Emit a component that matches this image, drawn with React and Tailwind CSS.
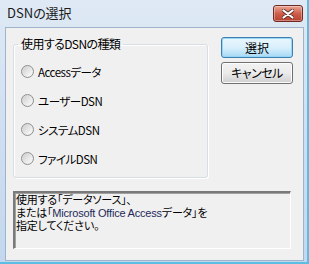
export default function App() {
  const radios = ["Accessデータ", "ユーザーDSN", "システムDSN", "ファイルDSN"];
  return (
    <div className="w-[309px] h-[264px] bg-gradient-to-b from-[#dfe9f5] via-[#cfdff1] to-[#c4d7ee] border-r-2 border-b-2 border-r-[#5cbde3] border-b-[#5cbde3] flex flex-col pl-[5px] pr-[3px] pb-[1px] font-['Noto_Sans_CJK_JP','Noto_Sans',sans-serif] [font-feature-settings:'palt'] text-black">
      <div className="h-[27px] shrink-0 flex items-start justify-between">
        <span className="mt-[4px] ml-[2px] text-[13px] leading-[18px] text-[#1a1a1a]">DSNの選択</span>
        <div className="mt-[5px] mr-[1px] w-[30px] h-[17px] rounded-[3px] border border-[#6e2b25] bg-gradient-to-b from-[#e8a596] via-[#cf5e4b] to-[#b8412f] flex items-center justify-center shadow-[inset_0_0_0_1px_rgba(255,255,255,0.35)]">
          <svg width="12" height="10" viewBox="0 0 12 10">
            <path d="M1.5 1.5 L10.5 8.5 M10.5 1.5 L1.5 8.5" stroke="#5a2a24" strokeWidth="3.6" strokeLinecap="round" />
            <path d="M1.5 1.5 L10.5 8.5 M10.5 1.5 L1.5 8.5" stroke="#ffffff" strokeWidth="2.2" strokeLinecap="round" />
          </svg>
        </div>
      </div>
      <div className="flex-1 bg-[#f0f0f0] border border-[#9fb3cb] pl-[7px] pt-[9px] flex flex-col">
        <div className="flex">
          <fieldset className="w-[195px] h-[141px] border border-[#d5dfe5] rounded-[3px] shadow-[inset_1px_1px_0_#fff,1px_1px_0_#fff] pl-[7px] flex flex-col">
            <legend className="ml-[-3px] px-[3px] text-[12px] leading-[14px] tracking-[-0.6px]">使用するDSNの種類</legend>
            <div className="mt-[6px] flex flex-col">
              {radios.map((r) => (
                <div key={r} className="h-[29px] flex items-center gap-[4px]">
                  <span className="w-[13px] h-[13px] rounded-full border border-[#8e8f8f] bg-gradient-to-br from-[#d4d4d4] to-[#f7f7f7] flex items-center justify-center">
                    <span className="w-[9px] h-[9px] rounded-full bg-gradient-to-br from-[#cfcfcf] via-[#e6e6e6] to-[#fbfbfb]" />
                  </span>
                  <span className="text-[11.5px] leading-[14px] tracking-[-0.5px]">{r}</span>
                </div>
              ))}
            </div>
          </fieldset>
          <div className="ml-[13px] flex flex-col gap-[4px]">
            <div className="w-[72px] h-[21px] rounded-[3px] border border-[#3c7fb1] bg-gradient-to-b from-[#eaf6fd] via-[#d9f0fc] to-[#a7d9f5] shadow-[inset_0_0_0_1px_#98d6f5] flex items-center justify-center text-[12px] leading-[14px]">選択</div>
            <div className="w-[72px] h-[22px] rounded-[3px] border border-[#707070] bg-gradient-to-b from-[#f2f2f2] via-[#ebebeb] to-[#cfcfcf] shadow-[inset_0_0_0_1px_#fcfcfc] flex items-center justify-center text-[12px] leading-[14px] tracking-[-0.5px]">キャンセル</div>
          </div>
        </div>
        <div className="mt-[13px] w-[278px] h-[58px] border-t-2 border-l-2 border-t-[#7a7a7a] border-l-[#7a7a7a] border-b border-r border-b-white border-r-white shadow-[inset_1px_1px_0_#a0a0a0] pl-[1px] pt-[1px] font-['Liberation_Sans','Noto_Sans_CJK_JP',sans-serif] text-[11px] leading-[13px] tracking-[-0.2px]">
          <div className="h-[13px]">使用する「データソース」、</div>
          <div className="h-[13px]">または「<span className="text-[#1e2a5a]">Microsoft Office Access</span>データ」を</div>
          <div className="h-[13px]">指定してください。</div>
        </div>
      </div>
    </div>
  );
}
